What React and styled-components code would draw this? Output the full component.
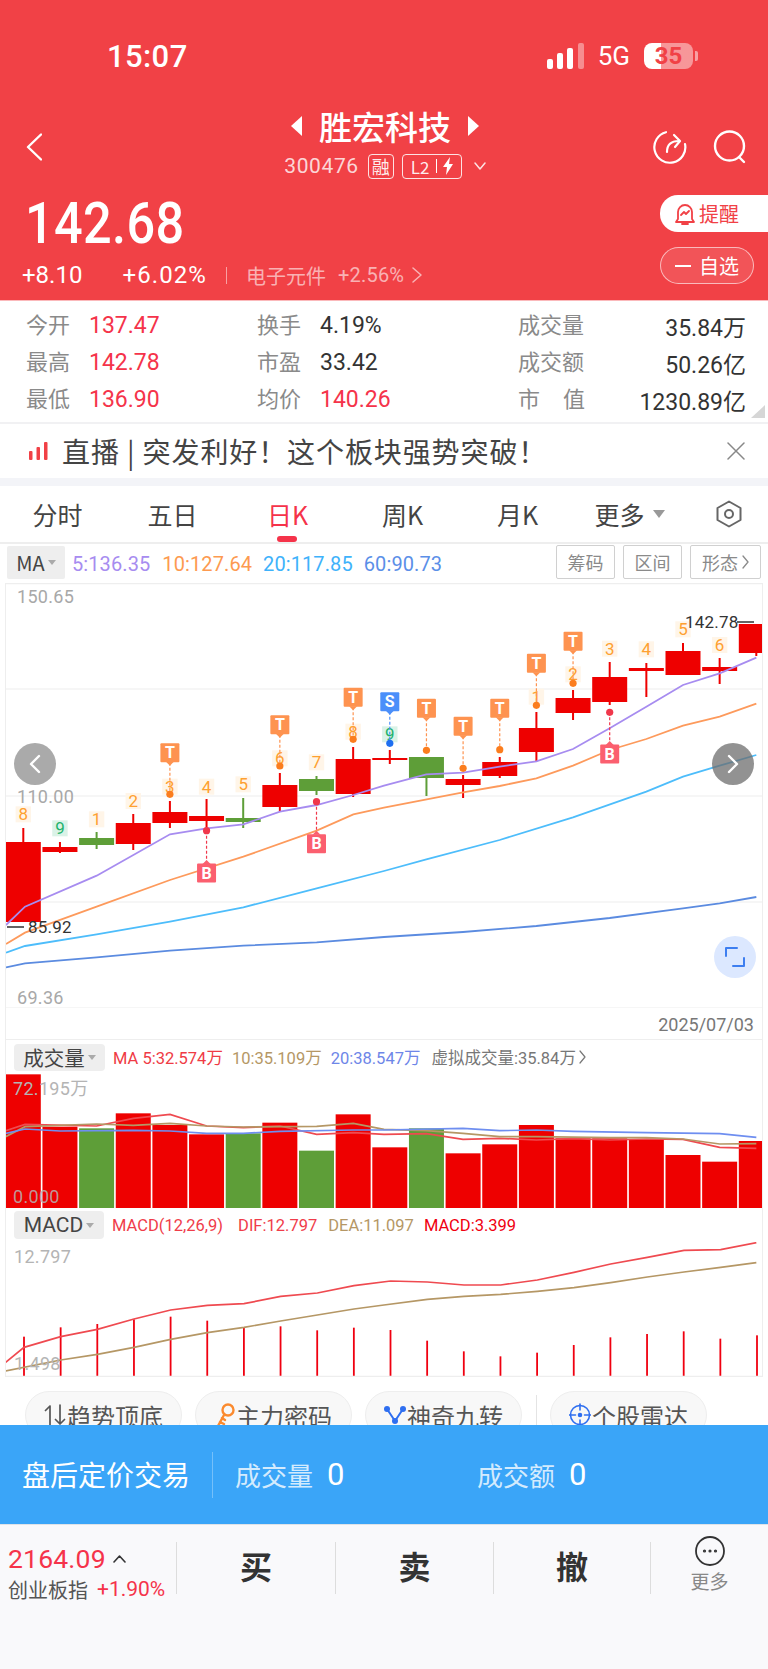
import React from "react";
import styled, { createGlobalStyle } from "styled-components";

const SANS = `Roboto, "Noto Sans CJK SC", sans-serif`;
const CJK = `"Noto Sans CJK SC", Roboto, sans-serif`;

const Global = createGlobalStyle`
  html, body { margin: 0; padding: 0; background: #fff; }
  * { box-sizing: border-box; }
  body { font-family: ${SANS}; }
`;

const Page = styled.div`
  width: 768px; height: 1669px; display: flex; flex-direction: column; overflow: hidden; background: #fff;
`;
const Header = styled.header`
  height: 300px; background: #f14146; color: #fff; display: flex; flex-direction: column; flex: none;
`;
const StatusBar = styled.div`
  height: 100px; display: flex; padding: 41px 75px 0 107px; justify-content: space-between; align-items: flex-start;
`;
const Clock = styled.div`
  font-size: 31px; line-height: 32px; font-weight: 500; letter-spacing: 0.4px;
`;
const StatusRight = styled.div`
  display: flex; align-items: center; height: 30px;
`;
const NetLabel = styled.span`
  font-size: 26px; margin: 0 14px; line-height: 30px;
`;
const Battery = styled.div`
  width: 49px; height: 26px; border-radius: 8px; position: relative; display: flex; align-items: center; justify-content: center;
  background: linear-gradient(90deg, #fff 0 35%, rgba(255,255,255,.45) 35% 100%);
  color: #f14146; font-size: 24px; font-weight: 700;
  &::after { content: ""; position: absolute; right: -5px; top: 8px; width: 3px; height: 10px; border-radius: 0 2px 2px 0; background: rgba(255,255,255,.5); }
`;
const NavRow = styled.div`
  height: 85px; display: flex; justify-content: space-between; padding: 0 21px 0 26px; flex: none;
`;
const NavSide = styled.div`
  display: flex; gap: 26px; margin-top: 30px; height: 34px; align-items: center; width: 94px; justify-content: ${p => p.$end ? "flex-end" : "flex-start"};
`;
const NavCenter = styled.div`
  display: flex; flex-direction: column; align-items: center; padding-top: 8px; margin-left: -3px;
`;
const TitleRow = styled.div`
  display: flex; align-items: center; gap: 17px; height: 36px;
`;
const Title = styled.div`
  font-family: ${CJK}; font-size: 33px; line-height: 36px; font-weight: 500;
`;
const SubRow = styled.div`
  display: flex; align-items: center; height: 26px; margin-top: 9px;
`;
const Code = styled.span`
  font-size: 21px; color: rgba(255,255,255,.8); letter-spacing: 0.6px;
`;
const Tag = styled.span`
  height: 25px; border: 1px solid rgba(255,255,255,.85); border-radius: 4px; display: inline-flex; align-items: center; justify-content: center;
  font-family: ${CJK}; font-size: ${p => p.$small ? 17 : 18}px; margin-left: ${p => p.$gap}px; width: ${p => p.$w}px; gap: 6px; color: rgba(255,255,255,.92);
`;
const QuoteRow = styled.div`
  display: flex; justify-content: space-between; flex: 1;
`;
const QuoteLeft = styled.div`
  padding: 10px 0 0 22px;
`;
const Price = styled.div`
  font-size: 57px; line-height: 58px; font-weight: 500; margin-left: 3px; letter-spacing: 0.4px;
  transform: scaleX(.885); transform-origin: left center;
`;
const ChangeRow = styled.div`
  display: flex; align-items: center; height: 30px; margin-top: 7px; font-size: 24px;
`;
const ChangePct = styled.span`
  margin-left: 40px; letter-spacing: 1.1px;
`;
const ChangeSep = styled.span`
  width: 1px; height: 17px; background: rgba(255,255,255,.5); margin: 0 19px;
`;
const Sector = styled.span`
  font-family: ${CJK}; font-size: 20px; color: rgba(255,255,255,.6);
`;
const SectorPct = styled.span`
  font-size: 20px; color: rgba(255,255,255,.6); margin: 0 8px 0 12px; letter-spacing: 0.2px;
`;
const Pills = styled.div`
  display: flex; flex-direction: column; align-items: flex-end; padding-top: 10px; gap: 15px;
`;
const AlertPill = styled.div`
  width: 108px; height: 37px; background: #fff; border-radius: 18px 0 0 18px; color: #f14146; display: flex; align-items: center; padding-left: 15px; gap: 4px;
  font-family: ${CJK}; font-size: 20px;
`;
const WatchPill = styled.div`
  width: 94px; height: 37px; margin-right: 14px; border: 1px solid rgba(255,255,255,.6); border-radius: 19px; background: rgba(255,255,255,.1);
  display: flex; align-items: center; justify-content: center; font-family: ${CJK}; font-size: 20px; gap: 8px;
`;
const WatchDash = styled.span`
  width: 16px; height: 2px; background: #fff;
`;

const Stats = styled.section`
  height: 124px; flex: none; position: relative; padding: 6px 0 0 26px; border-top: 1px solid #fbb9bb; border-bottom: 2px solid #f1f1f3;
  display: grid; grid-template-columns: 231px 261px 228px; grid-auto-rows: 37px;
`;
const Cell = styled.div`
  display: flex; align-items: center; ${p => p.$spread && "justify-content: space-between;"}
`;
const StatLabel = styled.span`
  font-family: ${CJK}; font-size: 22px; color: #8a8a8a; width: ${p => p.$w || 63}px; margin-bottom: 6px; ${p => p.$apart && "display:flex; justify-content:space-between;"}
`;
const StatValue = styled.span`
  font-size: 23px; color: ${p => p.$up ? "#f5334a" : "#333"}; font-family: ${SANS};
`;
const Corner = styled.div`
  position: absolute; right: 3px; bottom: 4px; width: 0; height: 0; border-left: 14px solid transparent; border-bottom: 13px solid #d6d6d6;
`;
const Banner = styled.div`
  height: 54px; flex: none; display: flex; align-items: center; padding: 0 23px 0 29px; background: #fff;
`;
const BannerText = styled.div`
  font-family: ${CJK}; font-size: 28px; color: #444; margin-left: 14px; flex: 1; white-space: pre; letter-spacing: 0.9px;
`;
const Spacer = styled.div`
  height: 8px; background: #f3f4f8; flex: none;
`;
const Tabs = styled.nav`
  height: 58px; flex: none; display: grid; grid-template-columns: repeat(6, 115px) 78px; align-items: center; border-bottom: 2px solid #eee;
`;
const Tab = styled.div`
  position: relative; height: 100%; display: flex; align-items: center; justify-content: center; gap: 8px;
  font-family: ${CJK}; font-size: 25px; color: ${p => p.$active ? "#f5334a" : "#444"};
  ${p => p.$shift && `padding-right: ${p.$shift}px;`}
  ${p => p.$active && `&::after { content: ""; position: absolute; bottom: 0; left: 47px; width: 20px; height: 6px; border-radius: 3px; background: #f5334a; }`}
`;
const Caret = styled.span`
  width: 0; height: 0; border-left: 6px solid transparent; border-right: 6px solid transparent; border-top: 8px solid #999;
`;
const MaRow = styled.div`
  height: 36px; flex: none; margin-bottom: 3px; display: flex; align-items: center; padding: 0 7px; font-size: 20px;
`;
const Selector = styled.div`
  display: flex; align-items: center; justify-content: center; gap: 3px; background: #eee; border-radius: ${p => p.$r || 2}px; height: ${p => p.$h}px; width: ${p => p.$w}px; flex: none;
  font-family: ${CJK}; font-size: ${p => p.$fs}px; color: #444;
`;
const SmallCaret = styled.span`
  width: 0; height: 0; border-left: 4px solid transparent; border-right: 4px solid transparent; border-top: 5px solid #aaa;
`;
const MaValue = styled.span`
  color: ${p => p.$c}; margin-left: ${p => p.$ml}px; margin-top: 3px; letter-spacing: 0.1px;
`;
const MaButtons = styled.div`
  margin-left: auto; display: flex; gap: 8px;
`;
const MaButton = styled.div`
  width: ${p => p.$w}px; height: 34px; border: 1px solid #d0d0d0; border-radius: 2px; color: #8a8a8a; font-family: ${CJK}; font-size: 18px;
  display: flex; align-items: center; justify-content: center; gap: 4px;
`;
const ChartPanel = styled.div`
  margin: 0 5px; border-left: 1px solid #eee; border-right: 1px solid #eee; flex: none; width: 758px;
`;
const PriceArea = styled.div`
  position: relative; height: 425px;
`;
const ChartSvg = styled.svg`
  display: block; width: 756px; height: ${p => p.$h}px; font-family: ${SANS};
`;
const RoundButton = styled.div`
  position: absolute; top: ${p => p.$top}px; ${p => p.$side}: ${p => p.$off}px; width: 42px; height: 42px; border-radius: 50%;
  background: ${p => p.$bg}; display: flex; align-items: center; justify-content: center;
`;
const DateRow = styled.div`
  height: 32px; border-bottom: 1px solid #eee; text-align: right; padding-right: 8px; font-size: 18px; line-height: 34px; color: #777;
`;
const IndicatorHead = styled.div`
  height: ${p => p.$h}px; display: flex; align-items: center; padding-left: 8px; font-size: 16.5px; white-space: nowrap;
`;
const Legend = styled.span`
  color: ${p => p.$c}; margin-left: ${p => p.$ml}px; font-family: ${SANS};
`;
const LegendCjk = styled.span`
  font-family: ${CJK};
`;
const ChipRow = styled.div`
  height: 48px; flex: none; overflow: hidden; padding: 14px 0 0 25px; display: flex; gap: 13px; align-items: flex-start;
`;
const Chip = styled.div`
  width: 157px; height: 48px; flex: none; border: 1px solid #eee; border-radius: 24px; background: #f8f8f8; display: flex; align-items: center; justify-content: center; gap: 1px;
  font-family: ${CJK}; font-size: 24px; color: #555;
`;
const ChipDivider = styled.span`
  width: 1px; height: 36px; background: #e4e4e4; margin: 4px 0 0 1px; flex: none;
`;
const AfterHours = styled.div`
  height: 99px; flex: none; background: #3aa5f8; color: #fff; display: flex; align-items: center; padding-left: 22px; font-family: ${CJK};
`;
const AfterTitle = styled.div`
  font-size: 28px; width: 191px; height: 46px; line-height: 44px; border-right: 1px solid rgba(255,255,255,.3);
`;
const AfterItem = styled.div`
  width: 242px; padding-left: 22px; display: flex; align-items: center; gap: 14px; font-size: 26px; color: rgba(255,255,255,.8);
`;
const AfterNum = styled.span`
  font-family: ${SANS}; font-size: 31px; color: #fff;
`;
const Bottom = styled.footer`
  flex: 1; background: #f9f9fb; border-top: 1px solid #dfe3e8; display: flex; padding-top: 17px; align-items: flex-start;
`;
const IndexCell = styled.div`
  width: 176px; height: 52px; padding-left: 8px; flex: none;
`;
const IndexTop = styled.div`
  display: flex; align-items: center; gap: 7px; height: 28px; margin-top: 2px; font-size: 26.5px; color: #f5334a; letter-spacing: 0.2px;
`;
const IndexBottom = styled.div`
  display: flex; align-items: center; height: 28px; margin-top: 3px; font-family: ${CJK}; font-size: 20px; color: #555;
`;
const IndexPct = styled.span`
  font-family: ${SANS}; font-size: 21px; color: #f5334a; margin-left: 9px;
`;
const Action = styled.div`
  width: ${p => p.$w}px; height: 52px; flex: none; border-left: 1px solid #ddd; display: flex; align-items: center; justify-content: center; padding-bottom: 6px;
  font-family: ${CJK}; font-size: 32px; font-weight: 700; color: #333;
`;
const MoreCell = styled.div`
  flex: 1; height: 52px; border-left: 1px solid #ddd; position: relative; display: flex; flex-direction: column; align-items: center; font-family: ${CJK}; font-size: 19px; color: #888;
`;
const MoreIcon = styled.div`
  margin-top: -6px; height: 34px;
`;

/* chart data taken from the picture: L / R read the left and right halves */
const L = (x, y, base) => [x / 3, y / 3 + base];
const R = (x, y, base) => [x / 3 + 384, y / 3 + base];
const line = (left, right, base) =>
  [...left.map(([x, y]) => L(x, y, base)), ...right.map(([x, y]) => R(x, y, base))].map(p => p.join(",")).join(" ");
const cx = i => 23.3 + 36.65 * i;

const UP = "#ee0000";
const DOWN = "#5e9e38";

const candles = [
  [0, 828, 842, 922, 922], [0, 842, 847, 852, 853], [1, 832, 838, 845, 849], [0, 814, 823, 844, 850],
  [0, 801, 812, 823, 828], [0, 799, 816, 821, 833], [1, 798, 818, 822, 828], [0, 773, 785, 807, 812],
  [1, 776, 779, 791, 795], [0, 747, 759, 794, 797], [0, 750, 758, 760, 764], [1, 757, 757, 778, 796],
  [0, 775, 779, 785, 798], [0, 757, 762, 776, 778], [0, 712, 728, 752, 761], [0, 690, 698, 713, 720],
  [0, 662, 677, 702, 705], [0, 663, 668, 671, 697], [0, 643, 651, 675, 675], [0, 658, 667, 671, 684],
  [0, 624, 624, 653, 656],
];

const ma5 = line(
  [[18,1035],[75,980],[290,887],[510,763],[620,745],[730,733],[840,695],[950,675],[1060,645]],
  [[0,617],[127,583],[237,578],[347,560],[457,544],[567,507],[677,445],[787,380],[897,315],[1007,280],[1117,233]], 580);
const ma10 = line(
  [[18,1092],[75,1058],[290,980],[510,900],[730,830],[950,752],[1060,703]],
  [[0,683],[237,637],[347,618],[457,595],[567,557],[677,510],[787,477],[897,437],[1007,410],[1117,371]], 580);
const ma20 = line(
  [[18,1118],[75,1098],[290,1063],[510,1025],[730,982],[950,925]],
  [[0,873],[127,838],[347,780],[567,712],[787,635],[897,590],[1007,557],[1117,525]], 580);
const ma60 = line(
  [[18,1162],[75,1150],[290,1132],[510,1112],[730,1097],[950,1087]],
  [[0,1071],[237,1056],[457,1038],[677,1014],[897,985],[1007,970],[1117,951]], 580);

const digits = [
  [0,"8",703,0],[1,"9",745,1],[2,"1",718,0],[3,"2",663,0],[4,"3",620,0],[5,"4",620,0],[6,"5",613,0],
  [7,"6",535,0],[8,"7",547,0],[9,"8",455,0],[10,"9",463,1],[14,"1",350,0],[15,"2",283,0],[16,"3",206,0],
  [17,"4",208,0],[18,"5",148,0],[19,"6",195,0],
];
const pageY = y => y / 3 + 580;

const tops = [
  ["T",4,518,643],["T",7,434,558],["T",9,352,478],["S",10,365,490],["T",11,385,511],["T",12,439,565],
  ["T",13,385,509],["T",14,250,376],["T",15,184,310],
];
const buys = [[5,879,752],[8,791,665],[16,522,397]];
const MARK = { T: "#fe9350", S: "#4b8ffa", B: "#fb5f6f" };
const DOT = { T: "#fb7d1e", S: "#1e6ff0", B: "#f0374b" };

const Marker = ({ kind, x, y, dot }) => {
  const up = kind === "B";
  const c = MARK[kind];
  const yc = pageY(y), yd = pageY(dot);
  return (
    <g>
      <line x1={x} x2={x} y1={up ? yd : yc + 10} y2={up ? yc - 10 : yd} stroke={up ? "#f0374b" : c} strokeWidth="1.2" strokeDasharray="3 2" />
      <circle cx={x} cy={yd} r="3.6" fill={DOT[kind]} />
      <rect x={x - 9.5} y={yc - 9.5} width="19" height="19" rx="1" fill={c} />
      <path d={up ? `M${x-4} ${yc-9}L${x} ${yc-13}L${x+4} ${yc-9}Z` : `M${x-4} ${yc+9}L${x} ${yc+13}L${x+4} ${yc+9}Z`} fill={c} />
      <text x={x} y={yc + 5.5} textAnchor="middle" fontSize="16" fontWeight="700" fill="#fff">{kind}</text>
    </g>
  );
};

const PriceChart = () => (
  <ChartSvg $h={425} viewBox="6 583 756 425">
    <g stroke="#eeeeee" strokeWidth="1.2">
      <line x1="6" x2="762" y1="583.6" y2="583.6" /><line x1="6" x2="762" y1="689" y2="689" />
      <line x1="6" x2="762" y1="796" y2="796" /><line x1="6" x2="762" y1="902" y2="902" />
      <line x1="6" x2="762" y1="1008" y2="1008" />
    </g>
    <g fill="#a8a8a8" fontSize="18" letterSpacing="0.3">
      <text x="17" y="603">150.65</text><text x="17" y="803">110.00</text><text x="17" y="1004">69.36</text>
    </g>
    {digits.map(([i, d, y, g]) => (
      <g key={i}>
        <rect x={cx(i) - 7.7} y={pageY(y) - 8} width="15.4" height="16" fill={g ? "#daf2e7" : "#fff5e8"} />
        <text x={cx(i)} y={pageY(y) + 6} textAnchor="middle" fontSize="17" fill={g ? "#1fb36c" : "#fea030"}>{d}</text>
      </g>
    ))}
    {candles.map(([g, a, b, c, d], i) => (
      <g key={i} fill={g ? DOWN : UP}>
        <rect x={cx(i) - 1} y={a} width="2" height={d - a} />
        <rect x={cx(i) - 17.5} y={b} width="35" height={Math.max(c - b, 2)} />
      </g>
    ))}
    <g fill="none" strokeWidth="1.8">
      <polyline points={ma60} stroke="#5b8be0" />
      <polyline points={ma20} stroke="#4dbdfb" />
      <polyline points={ma10} stroke="#fd9a5c" />
      <polyline points={ma5} stroke="#a78cf0" />
    </g>
    {tops.map(([k, i, y, dot]) => <Marker key={i} kind={k} x={cx(i)} y={y} dot={dot} />)}
    {buys.map(([i, y, dot]) => <Marker key={i} kind="B" x={cx(i)} y={y} dot={dot} />)}
    <g fill="#333" fontSize="17" letterSpacing="0.2">
      <text x="28" y="933">85.92</text><text x="685" y="628">142.78</text>
    </g>
    <g stroke="#222" strokeWidth="1.4">
      <line x1="7" x2="24" y1="927" y2="927" /><line x1="737" x2="754" y1="622" y2="622" />
    </g>
  </ChartSvg>
);

const volTops = [163,320,325,280,315,343,340,308,392,283,382,325,400,373,315,355,355,358,405,425,363];
const volGreen = new Set([2,6,8,11]);
const volRed = line(
  [[17,332],[75,313],[290,318],[400,295],[510,283],[620,318],[730,323],[840,318],[950,343],[1060,338]],
  [[0,343],[127,341],[237,358],[347,355],[457,360],[567,356],[677,360],[787,357],[897,358],[1007,382],[1117,385]], 1020);
const volTan = line(
  [[17,350],[75,320],[290,312],[400,316],[510,310],[620,318],[730,321],[950,319],[1060,310]],
  [[0,328],[127,332],[237,340],[347,350],[457,350],[677,353],[787,353],[897,357],[1007,372],[1117,371]], 1020);
const volBlue = line(
  [[17,340],[75,327],[180,333],[400,331],[510,333],[620,340],[730,340],[840,334],[1060,330]],
  [[0,330],[237,325],[347,332],[457,330],[567,334],[787,338],[1007,341],[1117,352]], 1020);

const VolumeChart = () => (
  <ChartSvg $h={134} viewBox="6 1074 756 134">
    {volTops.map((t, i) => {
      const y = t / 3 + 1020;
      return <rect key={i} x={cx(i) - 17.5} y={y} width="35" height={1208 - y} fill={volGreen.has(i) ? DOWN : UP} />;
    })}
    <g fill="none" strokeWidth="1.7">
      <polyline points={volRed} stroke="#ef4a50" />
      <polyline points={volTan} stroke="#b59765" />
      <polyline points={volBlue} stroke="#6e8ef0" />
    </g>
    <g fill="#b4b4b4" fontSize="18" letterSpacing="0.3">
      <text x="13" y="1094.5">72.195<tspan fontFamily={CJK}>万</tspan></text>
      <text x="13" y="1202.5" fillOpacity="0.85">0.000</text>
    </g>
  </ChartSvg>
);

const dif = line(
  [[17,1027],[72,982],[182,950],[292,928],[402,897],[512,870],[622,856],[732,851],[842,829],[952,819],[1062,797]],
  [[20,783],[130,786],[240,795],[350,795],[460,780],[570,757],[680,732],[790,712],[900,691],[1010,689],[1117,668]], 1020);
const dea = line(
  [[17,1053],[182,1020],[292,1003],[402,982],[512,958],[622,938],[732,922],[842,903],[952,885],[1062,867]],
  [[0,855],[130,838],[240,829],[350,823],[460,814],[570,803],[680,788],[790,771],[900,756],[1010,742],[1117,728]], 1020);
const macdTops = [950,922,912,898,890,902,923,919,931,923,930,962,994,1009,998,975,952,942,934,956,946];

const MacdChart = () => (
  <ChartSvg $h={135} viewBox="6 1242 756 135">
    {macdTops.map((t, i) => {
      const x = 24 + 36.65 * i;
      const y = t / 3 + 1020;
      return <rect key={i} x={x - 0.9} y={y} width="1.8" height={1376 - y} fill="#f00010" />;
    })}
    <g fill="none" strokeWidth="1.7">
      <polyline points={dif} stroke="#ef4a50" />
      <polyline points={dea} stroke="#b59765" />
    </g>
    <g fill="#b4b4b4" fontSize="18" letterSpacing="0.3">
      <text x="14" y="1262.5">12.797</text>
      <text x="14" y="1369.5">1.498</text>
    </g>
    <line x1="6" x2="762" y1="1376.4" y2="1376.4" stroke="#eee" strokeWidth="1.2" />
  </ChartSvg>
);

const Stroke = ({ w, h, children, color = "#fff", sw = 2.2 }) => (
  <svg width={w} height={h} viewBox={`0 0 ${w} ${h}`} fill="none" stroke={color} strokeWidth={sw} strokeLinecap="round" strokeLinejoin="round" style={{ flex: "none", display: "block" }}>
    {children}
  </svg>
);

export default function App() {
  return (
    <Page>
      <Global />
      <Header>
        <StatusBar>
          <Clock>15:07</Clock>
          <StatusRight>
            <svg width="37" height="26" viewBox="0 0 37 26" style={{ display: "block" }}>
              <rect x="0" y="16" width="6" height="10" rx="2" fill="#fff" />
              <rect x="10" y="10" width="6" height="16" rx="2" fill="#fff" />
              <rect x="20" y="5" width="6" height="21" rx="2" fill="#fff" />
              <rect x="31" y="0" width="6" height="26" rx="2" fill="#fff" opacity=".4" />
            </svg>
            <NetLabel>5G</NetLabel>
            <Battery>35</Battery>
          </StatusRight>
        </StatusBar>
        <NavRow>
          <NavSide>
            <Stroke w={16} h={28} sw={2.4}><path d="M15 1.5 2 14l13 12.5" /></Stroke>
          </NavSide>
          <NavCenter>
            <TitleRow>
              <svg width="11" height="20" viewBox="0 0 11 20"><path d="M11 0v20L0 10z" fill="#fff" /></svg>
              <Title>胜宏科技</Title>
              <svg width="11" height="20" viewBox="0 0 11 20"><path d="M0 0v20l11-10z" fill="#fff" /></svg>
            </TitleRow>
            <SubRow>
              <Code>300476</Code>
              <Tag $gap={9} $w={26}>融</Tag>
              <Tag $gap={8} $w={60} $small>
                L2
                <svg width="1" height="14"><rect width="1" height="14" fill="#fff" /></svg>
                <svg width="10" height="18" viewBox="0 0 10 18"><path d="M7 0 0 10h4l-1 8 7-11H6z" fill="#fff" /></svg>
              </Tag>
              <span style={{ marginLeft: 12, display: "flex" }}>
                <Stroke w={12} h={8} sw={1.5} color="rgba(255,255,255,.85)"><path d="M1 1l5 6 5-6" /></Stroke>
              </span>
            </SubRow>
          </NavCenter>
          <NavSide $end>
            <Stroke w={34} h={34} sw={2.2}>
              <path d="M13 2.2A15.5 15.5 0 1 0 32 14" />
              <path d="M14 22c0-7 3-11 12-11" /><path d="M21 5l6 6-5 6" />
            </Stroke>
            <Stroke w={34} h={34} sw={2.4}>
              <circle cx="16.5" cy="16" r="14.5" /><path d="M26 27l5 5" />
            </Stroke>
          </NavSide>
        </NavRow>
        <QuoteRow>
          <QuoteLeft>
            <Price>142.68</Price>
            <ChangeRow>
              <span>+8.10</span>
              <ChangePct>+6.02%</ChangePct>
              <ChangeSep />
              <Sector>电子元件</Sector>
              <SectorPct>+2.56%</SectorPct>
              <Stroke w={10} h={16} sw={1.5} color="rgba(255,255,255,.6)"><path d="M1 1l8 7-8 7" /></Stroke>
            </ChangeRow>
          </QuoteLeft>
          <Pills>
            <AlertPill>
              <Stroke w={20} h={24} sw={1.8} color="#f14146">
                <path d="M3 17V10a7 7 0 0 1 14 0v7l2 3H1z" /><path d="M7 22h6" /><path d="M6 13l3-3 2 2 3-3" />
              </Stroke>
              提醒
            </AlertPill>
            <WatchPill><WatchDash />自选</WatchPill>
          </Pills>
        </QuoteRow>
      </Header>

      <Stats>
        <Cell><StatLabel>今开</StatLabel><StatValue $up>137.47</StatValue></Cell>
        <Cell><StatLabel>换手</StatLabel><StatValue>4.19%</StatValue></Cell>
        <Cell $spread><StatLabel $w={67}>成交量</StatLabel><StatValue>35.84<LegendCjk>万</LegendCjk></StatValue></Cell>
        <Cell><StatLabel>最高</StatLabel><StatValue $up>142.78</StatValue></Cell>
        <Cell><StatLabel>市盈</StatLabel><StatValue>33.42</StatValue></Cell>
        <Cell $spread><StatLabel $w={67}>成交额</StatLabel><StatValue>50.26<LegendCjk>亿</LegendCjk></StatValue></Cell>
        <Cell><StatLabel>最低</StatLabel><StatValue $up>136.90</StatValue></Cell>
        <Cell><StatLabel>均价</StatLabel><StatValue $up>140.26</StatValue></Cell>
        <Cell $spread><StatLabel $w={67} $apart><span>市</span><span>值</span></StatLabel><StatValue>1230.89<LegendCjk>亿</LegendCjk></StatValue></Cell>
        <Corner />
      </Stats>

      <Banner>
        <svg width="19" height="18" viewBox="0 0 19 18" style={{ flex: "none" }}>
          <rect x="0" y="9" width="3.5" height="9" rx="1" fill="#f14146" />
          <rect x="7.5" y="5" width="3.5" height="13" rx="1" fill="#f14146" />
          <rect x="15" y="0" width="3.5" height="18" rx="1" fill="#f14146" />
        </svg>
        <BannerText>直播 | 突发利好！这个板块强势突破！</BannerText>
        <Stroke w={18} h={18} sw={1.5} color="#888"><path d="M1 1l16 16M17 1 1 17" /></Stroke>
      </Banner>
      <Spacer />

      <Tabs>
        <Tab>分时</Tab>
        <Tab>五日</Tab>
        <Tab $active>日K</Tab>
        <Tab>周K</Tab>
        <Tab>月K</Tab>
        <Tab $shift={6}>更多<Caret /></Tab>
        <Tab>
          <Stroke w={26} h={28} sw={2} color="#666">
            <path d="M13 1.5 24.5 8v12L13 26.5 1.5 20V8z" /><circle cx="13" cy="14" r="4" />
          </Stroke>
        </Tab>
      </Tabs>

      <MaRow>
        <Selector $w={58} $h={33} $fs={20}>MA<SmallCaret /></Selector>
        <MaValue $c="#a78cf0" $ml={7}>5:136.35</MaValue>
        <MaValue $c="#fd9a50" $ml={12}>10:127.64</MaValue>
        <MaValue $c="#3eb2fb" $ml={11}>20:117.85</MaValue>
        <MaValue $c="#5b8fe8" $ml={11}>60:90.73</MaValue>
        <MaButtons>
          <MaButton $w={59}>筹码</MaButton>
          <MaButton $w={59}>区间</MaButton>
          <MaButton $w={71}>形态
            <Stroke w={7} h={14} sw={1.3} color="#8a8a8a"><path d="M1 1l5 6-5 6" /></Stroke>
          </MaButton>
        </MaButtons>
      </MaRow>

      <ChartPanel>
        <PriceArea>
          <PriceChart />
          <RoundButton $top={160} $side="left" $off={8} $bg="#aaaaaa">
            <Stroke w={12} h={20} sw={2.4}><path d="M10 2 2 10l8 8" /></Stroke>
          </RoundButton>
          <RoundButton $top={160} $side="right" $off={8} $bg="rgba(110,110,110,.75)">
            <Stroke w={12} h={20} sw={2.4}><path d="M2 2l8 8-8 8" /></Stroke>
          </RoundButton>
          <RoundButton $top={353} $side="right" $off={6} $bg="#dce8ff">
            <Stroke w={20} h={20} sw={2} color="#3d7ef0"><path d="M1 9V1h11M19 11v8H8" /></Stroke>
          </RoundButton>
        </PriceArea>
        <DateRow>2025/07/03</DateRow>
        <IndicatorHead $h={34}>
          <Selector $w={91} $h={27} $fs={20.5} $r={4}>成交量<SmallCaret /></Selector>
          <Legend $c="#ef3b45" $ml={8}>MA 5:32.574<LegendCjk>万</LegendCjk></Legend>
          <Legend $c="#b59765" $ml={9}>10:35.109<LegendCjk>万</LegendCjk></Legend>
          <Legend $c="#6e86e8" $ml={9}>20:38.547<LegendCjk>万</LegendCjk></Legend>
          <Legend $c="#777" $ml={11}><LegendCjk>虚拟成交量</LegendCjk>:35.84<LegendCjk>万</LegendCjk></Legend>
          <span style={{ marginLeft: 3, display: "flex" }}>
            <Stroke w={7} h={14} sw={1.2} color="#777"><path d="M1 1l5 6-5 6" /></Stroke>
          </span>
        </IndicatorHead>
        <VolumeChart />
        <IndicatorHead $h={34}>
          <Selector $w={90} $h={28} $fs={21} $r={4}><span style={{ fontFamily: SANS }}>MACD</span><SmallCaret /></Selector>
          <Legend $c="#f03c4a" $ml={8}>MACD(12,26,9)</Legend>
          <Legend $c="#f03c4a" $ml={15}>DIF:12.797</Legend>
          <Legend $c="#b59765" $ml={11}>DEA:11.097</Legend>
          <Legend $c="#f00010" $ml={10}>MACD:3.399</Legend>
        </IndicatorHead>
        <MacdChart />
      </ChartPanel>

      <ChipRow>
        <Chip>
          <Stroke w={22} h={24} sw={1.7} color="#555"><path d="M6 22V3M1.5 7.5 6 3M16 2v19M11.5 16.5 16 21l4.5-4.5" /></Stroke>
          趋势顶底
        </Chip>
        <Chip>
          <Stroke w={20} h={26} sw={2.4} color="#fb8a2e">
            <circle cx="13" cy="8" r="5.5" /><path d="M9 13 3 24M5 20l4 2M7 16l3 2" />
          </Stroke>
          主力密码
        </Chip>
        <Chip>
          <svg width="22" height="20" viewBox="0 0 22 20" style={{ flex: "none" }}>
            <path d="M3 4l8 12 8-12" fill="none" stroke="#2f6ff0" strokeWidth="2" />
            <circle cx="3" cy="4" r="3" fill="#2f6ff0" /><circle cx="19" cy="4" r="3" fill="#2f6ff0" /><circle cx="11" cy="16" r="3" fill="#2f6ff0" />
          </svg>
          神奇九转
        </Chip>
        <ChipDivider />
        <Chip>
          <Stroke w={22} h={24} sw={1.6} color="#2f6ff0">
            <circle cx="11" cy="12" r="9.5" /><path d="M11 1v6M11 17v6M0.5 12h6M15.5 12h6" /><circle cx="11" cy="12" r="1.5" fill="#2f6ff0" />
          </Stroke>
          个股雷达
        </Chip>
      </ChipRow>

      <AfterHours>
        <AfterTitle>盘后定价交易</AfterTitle>
        <AfterItem>成交量<AfterNum>0</AfterNum></AfterItem>
        <AfterItem>成交额<AfterNum>0</AfterNum></AfterItem>
      </AfterHours>

      <Bottom>
        <IndexCell>
          <IndexTop>2164.09
            <Stroke w={13} h={9} sw={1.6} color="#333"><path d="M1 8l5.5-6L12 8" /></Stroke>
          </IndexTop>
          <IndexBottom>创业板指<IndexPct>+1.90%</IndexPct></IndexBottom>
        </IndexCell>
        <Action $w={159}>买</Action>
        <Action $w={158}>卖</Action>
        <Action $w={157}>撤</Action>
        <MoreCell>
          <MoreIcon>
            <Stroke w={30} h={30} sw={1.8} color="#333">
              <circle cx="15" cy="15" r="14" /><circle cx="9.5" cy="15" r=".7" /><circle cx="15" cy="15" r=".7" /><circle cx="20.5" cy="15" r=".7" />
            </Stroke>
          </MoreIcon>
          更多
        </MoreCell>
      </Bottom>
    </Page>
  );
}
